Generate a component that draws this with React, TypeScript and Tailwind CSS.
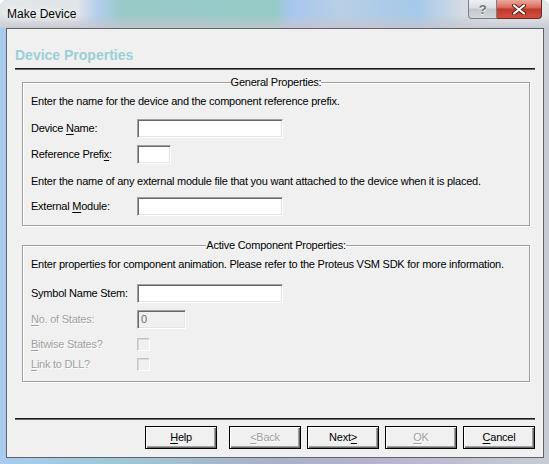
import React from 'react';

const FONT = "font-['Liberation_Sans',Arial,sans-serif]";

const Sunken: React.FC<{ w: string; disabled?: boolean; value?: string }> = ({ w, disabled, value }) => (
  <div
    className={`${w} h-[19px] border border-t-[#a0a0a0] border-l-[#a0a0a0] border-b-white border-r-white shadow-[inset_1px_1px_0_#696969,inset_-1px_-1px_0_#e3e3e3] ${
      disabled ? 'bg-[#f0f0f0] text-[#6d6d6d]' : 'bg-white'
    } px-[3px] text-[11px] leading-[17px]`}
  >
    {value}
  </div>
);

const Check: React.FC = () => (
  <div className="w-[13px] h-[13px] border border-t-[#c4c4c4] border-l-[#c4c4c4] border-b-white border-r-white shadow-[inset_1px_1px_0_#d8d8d8] bg-[#f0f0f0]" />
);

const Label: React.FC<{ children: React.ReactNode; disabled?: boolean }> = ({ children, disabled }) => (
  <span
    className={`w-[106px] shrink-0 ${disabled ? 'text-[#a0a0a0] [text-shadow:1px_1px_0_#fff]' : 'text-black'}`}
  >
    {children}
  </span>
);

const U: React.FC<{ children: React.ReactNode }> = ({ children }) => (
  <span className="underline underline-offset-[2px] decoration-1">{children}</span>
);

const Group: React.FC<{ title: string; children: React.ReactNode }> = ({ title, children }) => (
  <fieldset className="ml-[15px] w-[508px] border border-[#a0a0a0] shadow-[inset_1px_1px_0_#fff,1px_1px_0_#fff] px-[8px]">
    <legend className="mx-auto px-0 h-[14px] leading-[14px] text-black">{title}</legend>
    {children}
  </fieldset>
);

const Btn: React.FC<{ children: React.ReactNode; disabled?: boolean }> = ({ children, disabled }) => (
  <button
    className={`w-[72px] h-[23px] border border-black bg-[#f0f0f0] shadow-[inset_1px_1px_0_#fff,inset_-1px_-1px_0_#696969,inset_-2px_-2px_0_#a0a0a0] text-[11px] leading-[21px] ${
      disabled ? 'text-[#a0a0a0] [text-shadow:1px_1px_0_#fff]' : 'text-black'
    }`}
  >
    {children}
  </button>
);

export default function App() {
  return (
    <div
      className={`${FONT} relative w-[549px] h-[464px] overflow-hidden rounded-t-[7px] flex flex-col bg-[linear-gradient(to_right,#a9cbee_0%,#b3d0ec_40%,#9fc9d6_70%,#c5ccd4_100%)] text-[11px] tracking-[-0.24px]`}
    >
      {/* Title bar */}
      <div className="relative h-[28px] shrink-0 bg-[linear-gradient(to_bottom,rgba(255,255,255,0)_50%,rgba(196,198,206,0.85)_100%),linear-gradient(to_right,#e4e7ea_0%,#e1e5e8_14%,#b1cdec_18%,#98cac8_22%,#95cac7_50%,#a7c7ee_53%,#b9cfe6_62%,#a4c9ea_76%,#d3dbe4_84%,#e3e6e9_90%)]">
        <span className="absolute left-[7px] top-[6px] text-[12px] tracking-normal leading-[16px] text-black [text-shadow:0_0_6px_#fff,0_0_10px_#fff]">
          Make Device
        </span>
        <div className="absolute right-[7px] top-0 flex">
          <div className="w-[29px] h-[19px] rounded-bl-[4px] border border-t-0 border-[#7a7f86] bg-[linear-gradient(to_bottom,#eef0f2_0%,#d9dde1_45%,#c2c7cc_50%,#d4d8dc_100%)] flex items-center justify-center text-[13px] font-bold text-[#6e747a] leading-none [text-shadow:0_1px_0_#fff]">
            ?
          </div>
          <div className="w-[45px] h-[19px] rounded-br-[4px] border border-t-0 border-l-0 border-[#6b2a22] bg-[linear-gradient(to_bottom,#eba89c_0%,#d9705f_40%,#c0392b_52%,#d2503e_100%)] flex items-center justify-center">
            <svg width="14" height="11" viewBox="0 0 14 11">
              <path d="M2 1.5 L12 9.5 M12 1.5 L2 9.5" stroke="#5c1a12" strokeWidth="4" strokeLinecap="round" />
              <path d="M2 1.5 L12 9.5 M12 1.5 L2 9.5" stroke="#fff" strokeWidth="2.2" strokeLinecap="round" />
            </svg>
          </div>
        </div>
      </div>

      {/* Client area */}
      <div className="ml-[6px] mr-[5px] h-[430px] shrink-0 border border-[#5f646a] bg-[#f0f0f0] flex flex-col">
        <div className="ml-[8px] mt-[18px] h-[16px] leading-[16px] text-[14px] font-bold tracking-normal text-[#9ccfd5]">
          Device Properties
        </div>
        <div className="ml-[8px] mt-[5px] w-[520px] h-[2px] bg-[#1a1a1a] border-b border-[#6a6a6a]" />

        <div className="mt-[5px]">
          <Group title="General Properties:">
            <div className="mt-[6px] h-[13px] leading-[13px]">
              Enter the name for the device and the component reference prefix.
            </div>
            <div className="mt-[11px] flex items-center">
              <Label>
                Device <U>N</U>ame:
              </Label>
              <Sunken w="w-[146px]" />
            </div>
            <div className="mt-[7px] flex items-center">
              <Label>
                Reference Prefi<U>x</U>:
              </Label>
              <Sunken w="w-[34px]" />
            </div>
            <div className="mt-[11px] h-[13px] leading-[13px]">
              Enter the name of any external module file that you want attached to the device when it is placed.
            </div>
            <div className="mt-[9px] mb-[9px] flex items-center">
              <Label>
                External <U>M</U>odule:
              </Label>
              <Sunken w="w-[146px]" />
            </div>
          </Group>
        </div>

        <div className="mt-[12px]">
          <Group title="Active Component Properties:">
            <div className="mt-[6px] h-[13px] leading-[13px]">
              Enter properties for component animation. Please refer to the Proteus VSM SDK for more information.
            </div>
            <div className="mt-[13px] flex items-center">
              <Label>Symbol Name Stem:</Label>
              <Sunken w="w-[146px]" />
            </div>
            <div className="mt-[7px] flex items-center">
              <Label disabled>
                <U>N</U>o. of States:
              </Label>
              <Sunken w="w-[49px]" disabled value="0" />
            </div>
            <div className="mt-[9px] flex items-center h-[13px]">
              <Label disabled>
                <U>B</U>itwise States?
              </Label>
              <Check />
            </div>
            <div className="mt-[7px] mb-[10px] flex items-center h-[13px]">
              <Label disabled>
                <U>L</U>ink to DLL?
              </Label>
              <Check />
            </div>
          </Group>
        </div>

        <div className="ml-[8px] mt-[36px] w-[520px] h-[2px] bg-[#1a1a1a] border-b border-[#6a6a6a]" />

        <div className="mt-[6px] ml-[138px] flex gap-[6px]">
          <Btn>
            <U>H</U>elp
          </Btn>
          <div className="ml-[6px] flex gap-[6px]">
            <Btn disabled>
              <U>&lt;</U>Back
            </Btn>
            <Btn>
              Next<U>&gt;</U>
            </Btn>
            <Btn disabled>
              <U>O</U>K
            </Btn>
            <Btn>
              <U>C</U>ancel
            </Btn>
          </div>
        </div>
      </div>

      {/* Bottom frame */}
      <div className="flex-1 bg-[linear-gradient(to_right,#a9cbee_0%,#9ec8d8_20%,#aab0c8_50%,#b9b3cf_70%,#c8ccd4_100%)]" />
    </div>
  );
}
